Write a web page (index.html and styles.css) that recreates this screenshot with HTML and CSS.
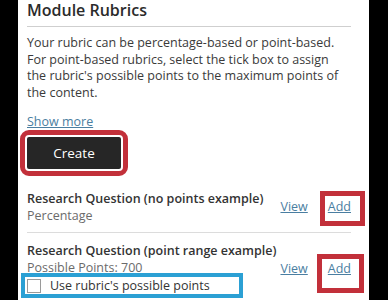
FILE: index.html
```html
<!DOCTYPE html>
<html lang="en">
<head>
<meta charset="utf-8">
<title>Module Rubrics</title>
<link rel="stylesheet" href="styles.css">
</head>
<body>
<div class="panel">
  <h2 class="title">Module Rubrics</h2>
  <p class="desc">Your rubric can be percentage-based or point-based. For point-based rubrics, select the tick box to assign the rubric's possible points to the maximum points of the content.</p>
  <a class="more" href="#">Show more</a>
  <div class="create-row"><button class="create" type="button">Create</button></div>
  <ul class="rubrics">
    <li class="row row-first">
      <div class="info">
        <div class="name">Research Question (no points example)</div>
        <div class="meta">Percentage</div>
      </div>
      <div class="links">
        <a href="#" class="link">View</a>
        <a href="#" class="link add add-1">Add</a>
      </div>
    </li>
    <li class="row row-second">
      <div class="info">
        <div class="name">Research Question (point range example)</div>
        <div class="meta">Possible Points: 700</div>
        <label class="check"><span class="box"></span><span>Use rubric's possible points</span></label>
      </div>
      <div class="links">
        <a href="#" class="link">View</a>
        <a href="#" class="link add add-2">Add</a>
      </div>
    </li>
  </ul>
</div>
</body>
</html>
```

FILE: styles.css
```css
html, body {
  margin: 0;
  background: #000;
}
body {
  font-family: "Open Sans", "DejaVu Sans", sans-serif;
  color: #333;
}
.panel {
  margin-left: 18px;
  width: 351px;
  height: 300px;
  box-sizing: border-box;
  padding: 0 18px 0 9px;
  background: #fff;
  overflow: hidden;
}
.title {
  margin: 0;
  font-size: 16px;
  line-height: 20px;
  font-weight: 600;
  color: #2b2b2b;
  padding-bottom: 6px;
  border-bottom: 1px solid #cfcfcf;
}
.desc {
  margin: 8px 0 0;
  font-size: 12.5px;
  line-height: 16.5px;
  color: #3a3a3a;
}
.more {
  display: block;
  width: max-content;
  margin-top: 12px;
  font-size: 12.5px;
  line-height: 17px;
  color: #4a7ea1;
  text-decoration: underline;
}
.create-row {
  margin-top: 7px;
}
.create {
  display: block;
  width: 94px;
  height: 32px;
  border: 0;
  border-radius: 2px;
  background: #262626;
  color: #fff;
  font-family: inherit;
  font-size: 13.5px;
  outline: 5px solid #c2303a;
  outline-offset: 2px;
}
.rubrics {
  list-style: none;
  margin: 0;
  padding: 0;
}
.row {
  display: flex;
  align-items: flex-start;
}
.row-first {
  margin-top: 22px;
  padding-bottom: 8px;
  border-bottom: 1px solid #dcdcdc;
}
.row-second {
  padding-top: 10px;
}
.info {
  flex: 1;
  min-width: 0;
}
.name {
  font-size: 12.5px;
  line-height: 16.5px;
  font-weight: 600;
  color: #333;
  white-space: nowrap;
}
.meta {
  font-size: 12.5px;
  line-height: 16.5px;
  color: #6b6b6b;
}
.links {
  display: flex;
  gap: 20px;
  flex-shrink: 0;
}
.row-first .links {
  margin-top: 7px;
}
.row-second .links {
  margin-top: 17px;
}
.link {
  font-size: 12.5px;
  line-height: 17px;
  color: #4a7ea1;
  text-decoration: underline;
}
.add {
  position: relative;
}
.add::after {
  content: "";
  position: absolute;
  border: 5px solid #c2303a;
}
.add-1::after {
  left: -8px;
  right: -14px;
  top: -7px;
  bottom: -11px;
}
.add-2::after {
  left: -11px;
  right: -13px;
  top: -6px;
  bottom: -16px;
}
.check {
  position: relative;
  display: flex;
  align-items: center;
  gap: 9px;
  margin: -3px 0 0 -6px;
  width: 222px;
  height: 25px;
  box-sizing: border-box;
  padding-left: 2px;
  border: 4px solid #2ba0d4;
  font-size: 12.5px;
  color: #333;
}
.box {
  width: 14px;
  height: 14px;
  box-sizing: border-box;
  border: 1px solid #9a9a9a;
  background: #fff;
}
```
